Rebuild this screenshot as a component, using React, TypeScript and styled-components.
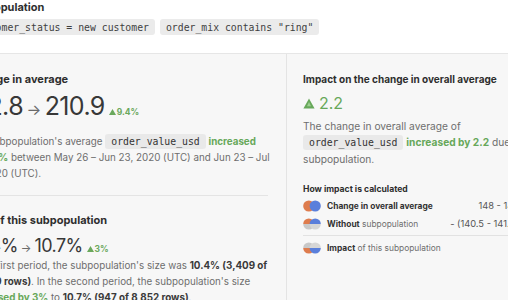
import React from "react";
import styled, { createGlobalStyle } from "styled-components";

const Global = createGlobalStyle`
  html, body { margin: 0; padding: 0; }
  body {
    background: #f7f7f7;
    font-family: Inter, "Noto Sans", sans-serif;
    overflow: hidden;
    -webkit-font-smoothing: antialiased;
  }
`;

const Page = styled.div`
  width: 508px;
  height: 300px;
  overflow: hidden;
`;

const Canvas = styled.div`
  margin-left: -34px;
  width: 640px;
`;

const Header = styled.section`
  box-sizing: border-box;
  height: 54px;
  background: #ffffff;
  border-bottom: 1px solid #e6e6e6;
`;

const Title = styled.h2`
  margin: 0;
  font-size: 11px;
  line-height: 14px;
  font-weight: 700;
  color: #2e2e2e;
`;

const ChipRow = styled.div`
  display: flex;
  gap: 5px;
  margin-top: 5px;
`;

const FilterChip = styled.span`
  display: inline-flex;
  align-items: center;
  height: 16px;
  padding: 0 6px;
  border-radius: 3px;
  background: #ebebeb;
  color: #3f3f3f;
  font-family: "DejaVu Sans Mono", "Liberation Mono", monospace;
  font-size: 9.8px;
  white-space: pre;
`;

const Body = styled.div`
  display: grid;
  grid-template-columns: 320px 1fr;
  height: 246px;
`;

const LeftPanel = styled.section`
  padding: 18px 18px 0 2px;
`;

const RightPanel = styled.section`
  border-left: 1px solid #e4e4e4;
  padding: 18px 0 0 16px;
`;

const SectionTitle = styled.h3`
  margin: 0;
  font-size: 11px;
  line-height: 14px;
  font-weight: 700;
  color: #2e2e2e;
  white-space: nowrap;
`;

const BigValue = styled.div<{ $size: number; $h: number; $mt: number; $indent: number }>`
  display: flex;
  align-items: baseline;
  height: ${(p) => p.$h}px;
  margin: ${(p) => p.$mt}px 0 0 ${(p) => p.$indent}px;
  font-size: ${(p) => p.$size}px;
  line-height: ${(p) => p.$h}px;
  font-weight: 400;
  color: #383838;
  white-space: nowrap;
  letter-spacing: -0.6px;
`;

const Arrow = styled.span<{ $gap: number }>`
  font-size: 0.62em;
  color: #6a6a6a;
  margin: 0 ${(p) => p.$gap}em;
  letter-spacing: 0;
`;

const Delta = styled.span`
  display: inline-flex;
  align-items: center;
  gap: 1px;
  margin-left: 4px;
  font-size: 8.5px;
  font-weight: 700;
  color: #6aa85c;
  letter-spacing: 0;
`;

const Text = styled.p<{ $mt: number; $size: number }>`
  margin: ${(p) => p.$mt}px 0 0;
  font-size: ${(p) => p.$size}px;
  line-height: 16px;
  color: #6e6e6e;
  white-space: nowrap;
`;

const Strong = styled.b`
  font-weight: 700;
  color: #3a3a3a;
`;

const Up = styled.b`
  font-weight: 700;
  color: #67a85a;
`;

const Code = styled.span`
  padding: 2px 6px;
  border-radius: 3px;
  background: #e9e9e9;
  color: #333;
  font-family: "DejaVu Sans Mono", "Liberation Mono", monospace;
  font-size: 9.8px;
`;

const Divider = styled.hr<{ $mt: number; $mb: number }>`
  margin: ${(p) => p.$mt}px 0 ${(p) => p.$mb}px;
  border: 0;
  border-top: 1px solid #e4e4e4;
`;

const PanelTitle = styled.h3`
  margin: 0;
  font-size: 10px;
  line-height: 14px;
  font-weight: 700;
  color: #2e2e2e;
  white-space: nowrap;
`;

const ImpactValue = styled.div`
  display: flex;
  align-items: center;
  gap: 4px;
  margin-top: 7px;
  height: 20px;
  font-size: 16px;
  color: #67a85a;
`;

const SubTitle = styled.h4`
  margin: 16px 0 0;
  font-size: 8.6px;
  line-height: 12px;
  font-weight: 700;
  color: #2e2e2e;
  white-space: nowrap;
`;

const CalcGrid = styled.div`
  display: grid;
  grid-template-columns: 18px minmax(0, 1fr) auto;
  column-gap: 6px;
  width: 216px;
  margin-top: 2px;
  align-items: center;
`;

const CalcLabel = styled.span`
  font-size: 8.4px;
  line-height: 18px;
  color: #6e6e6e;
  white-space: nowrap;
  b { font-weight: 700; color: #333; }
`;

const CalcValue = styled.span`
  justify-self: end;
  font-size: 9.3px;
  line-height: 18px;
  color: #555;
  white-space: nowrap;
`;

const GridRule = styled.div`
  grid-column: 1 / -1;
  height: 1px;
  background: #e2e2e2;
  margin: 2px 0 3px;
`;

const ORANGE = "#de7c4d";
const BLUE = "#5a7fdb";
const GRAY = "#c8c8c8";

type VennMode = "full" | "without" | "impact";

const Venn = ({ mode }: { mode: VennMode }) => {
  const id = `v-${mode}`;
  if (mode === "full") {
    return (
      <svg width="18" height="12" viewBox="0 0 18 12">
        <circle cx="5.8" cy="6" r="5.6" fill={ORANGE} />
        <circle cx="12.2" cy="6" r="5.6" fill={BLUE} />
      </svg>
    );
  }
  const coloredTop = mode === "without";
  return (
    <svg width="18" height="12" viewBox="0 0 18 12">
      <defs>
        <clipPath id={`${id}-t`}>
          <rect x="0" y="0" width="18" height="6" />
        </clipPath>
        <clipPath id={`${id}-b`}>
          <rect x="0" y="6" width="18" height="6" />
        </clipPath>
      </defs>
      <g clipPath={`url(#${id}-${coloredTop ? "b" : "t"})`}>
        <circle cx="5.8" cy="6" r="5.6" fill={GRAY} />
        <circle cx="12.2" cy="6" r="5.6" fill="#d6d6d6" />
      </g>
      <g clipPath={`url(#${id}-${coloredTop ? "t" : "b"})`}>
        <circle cx="5.8" cy="6" r="5.6" fill={ORANGE} />
        <circle cx="12.2" cy="6" r="5.6" fill={BLUE} />
      </g>
    </svg>
  );
};

const Triangle = () => (
  <svg width="12" height="11" viewBox="0 0 12 11">
    <path d="M6 0.5 L11.6 10.5 L0.4 10.5 Z" fill="#67a85a" />
    <path d="M6 4 L8 8.2 L4 8.2 Z" fill="#9fcf93" />
  </svg>
);

const SmallTri = () => (
  <svg width="7" height="6" viewBox="0 0 7 6">
    <path d="M3.5 0 L7 6 L0 6 Z" fill="#6aa85c" />
  </svg>
);

export default function App() {
  return (
    <Page>
      <Global />
      <Canvas>
        <Header>
          <Title>Subpopulation</Title>
          <ChipRow>
            <FilterChip>customer_status = new customer</FilterChip>
            <FilterChip>order_mix contains "ring"</FilterChip>
          </ChipRow>
        </Header>
        <Body>
          <LeftPanel>
            <SectionTitle>Change in average</SectionTitle>
            <BigValue $size={25} $h={28} $mt={6} $indent={-5}>
              192.8<Arrow $gap={0.22}>→</Arrow>210.9
              <Delta>
                <SmallTri />
                9.4%
              </Delta>
            </BigValue>
            <Text $mt={14} $size={9.8}>
              The subpopulation's average <Code>order_value_usd</Code> <Up>increased</Up>
              <br />
              <Up>by 9.4%</Up> between May 26 – Jun 23, 2020 (UTC) and Jun 23 – Jul
              <br />
              21, 2020 (UTC).
            </Text>
            <Divider $mt={13} $mb={17} />
            <SectionTitle>Size of this subpopulation</SectionTitle>
            <BigValue $size={18} $h={22} $mt={8} $indent={0}>
              10.4%<Arrow $gap={0.28}>→</Arrow>10.7%
              <Delta>
                <SmallTri />
                3%
              </Delta>
            </BigValue>
            <Text $mt={1} $size={9.8}>
              In the first period, the subpopulation's size was <Strong>10.4% (3,409 of</Strong>
              <br />
              <Strong>32,749 rows)</Strong>. In the second period, the subpopulation's size
              <br />
              <Up>increased by 3%</Up> to <Strong>10.7% (947 of 8,852 rows)</Strong>.
            </Text>
          </LeftPanel>
          <RightPanel>
            <PanelTitle>Impact on the change in overall average</PanelTitle>
            <ImpactValue>
              <Triangle />
              2.2
            </ImpactValue>
            <Text $mt={5} $size={10.2}>
              The change in overall average of
              <br />
              <Code>order_value_usd</Code> <Up>increased by 2.2</Up> due to this
              <br />
              subpopulation.
            </Text>
            <SubTitle>How impact is calculated</SubTitle>
            <CalcGrid>
              <Venn mode="full" />
              <CalcLabel>
                <b>Change in overall average</b>
              </CalcLabel>
              <CalcValue>148 - 146</CalcValue>
              <Venn mode="without" />
              <CalcLabel>
                <b>Without</b> subpopulation
              </CalcLabel>
              <CalcValue>- (140.5 - 141.4)</CalcValue>
              <GridRule />
              <Venn mode="impact" />
              <CalcLabel>
                <b>Impact</b> of this subpopulation
              </CalcLabel>
              <span />
            </CalcGrid>
          </RightPanel>
        </Body>
      </Canvas>
    </Page>
  );
}
